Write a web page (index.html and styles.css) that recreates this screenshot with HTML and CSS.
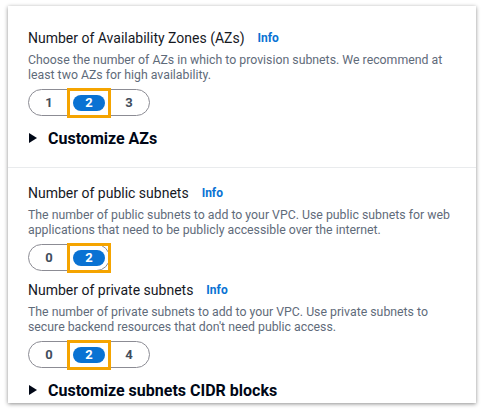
FILE: index.html
```html
<!DOCTYPE html>
<html>
<head>
<meta charset="utf-8">
<link rel="stylesheet" href="styles.css">
</head>
<body>
<div class="panel">
  <section class="sec sec-first">
    <div class="label">Number of Availability Zones (AZs) <a class="info">Info</a></div>
    <p class="desc">Choose the number of AZs in which to provision subnets. We recommend at least two AZs for high availability.</p>
    <div class="seg">
      <span class="opt">1</span>
      <span class="opt sel"><span class="pill">2</span></span>
      <span class="opt">3</span>
    </div>
    <div class="expand"><svg class="tri" width="8" height="10" viewBox="0 0 8 10"><path d="M0 0 L8 5 L0 10 Z" fill="#000716"/></svg>Customize AZs</div>
  </section>
  <section class="sec sec-second">
    <div class="label">Number of public subnets <a class="info">Info</a></div>
    <p class="desc">The number of public subnets to add to your VPC. Use public subnets for web applications that need to be publicly accessible over the internet.</p>
    <div class="seg">
      <span class="opt">0</span>
      <span class="opt sel"><span class="pill">2</span></span>
    </div>
    <div class="label label-gap">Number of private subnets <a class="info">Info</a></div>
    <p class="desc">The number of private subnets to add to your VPC. Use private subnets to secure backend resources that don't need public access.</p>
    <div class="seg">
      <span class="opt">0</span>
      <span class="opt sel"><span class="pill">2</span></span>
      <span class="opt">4</span>
    </div>
    <div class="expand"><svg class="tri" width="8" height="10" viewBox="0 0 8 10"><path d="M0 0 L8 5 L0 10 Z" fill="#000716"/></svg>Customize subnets CIDR blocks</div>
  </section>
</div>
</body>
</html>
```

FILE: styles.css
```css
html, body {
  margin: 0;
  padding: 0;
  background: #ffffff;
}
body {
  font-family: Roboto, "Open Sans", "Liberation Sans", sans-serif;
  color: #16191f;
  width: 485px;
  height: 410px;
  overflow: hidden;
}
.panel {
  margin: 6px 9px 0 8px;
  height: 397px;
  background: #fff;
  box-shadow: 0 1px 4px rgba(0, 0, 0, 0.45);
  overflow: hidden;
}
.sec {
  padding: 0 20px;
}
.sec-first {
  padding-top: 22px;
  padding-bottom: 18px;
  border-bottom: 1px solid #e9ebed;
}
.sec-second {
  padding-top: 15px;
}
.label {
  font-size: 14px;
  line-height: 20px;
  height: 20px;
  display: flex;
  align-items: center;
}
.label-gap {
  margin-top: 9px;
}
.info {
  color: #0972d3;
  font-weight: 700;
  font-size: 12px;
  margin-left: 13px;
}
.desc {
  margin: 5px 0 0;
  font-size: 12.3px;
  line-height: 15px;
  color: #5f6b7a;
}
.seg {
  margin-top: 6px;
  display: inline-flex;
  border: 1px solid #8c8c94;
  border-radius: 14px;
  height: 25px;
}
.opt {
  position: relative;
  width: 40px;
  display: flex;
  align-items: center;
  justify-content: center;
  font-size: 13px;
  font-weight: 700;
  color: #414d5c;
}
.opt.sel::after {
  content: "";
  position: absolute;
  left: -2px;
  right: -2px;
  top: -2px;
  bottom: -3px;
  border: 3px solid #f5a400;
}
.pill {
  width: 32px;
  height: 16px;
  border-radius: 8px;
  background: #0972d3;
  color: #fff;
  display: flex;
  align-items: center;
  justify-content: center;
}
.expand {
  margin-top: 11px;
  height: 22px;
  display: flex;
  align-items: center;
  font-size: 16px;
  font-weight: 700;
  color: #000716;
}
.tri {
  margin-left: 1px;
  margin-right: 11px;
}
```
